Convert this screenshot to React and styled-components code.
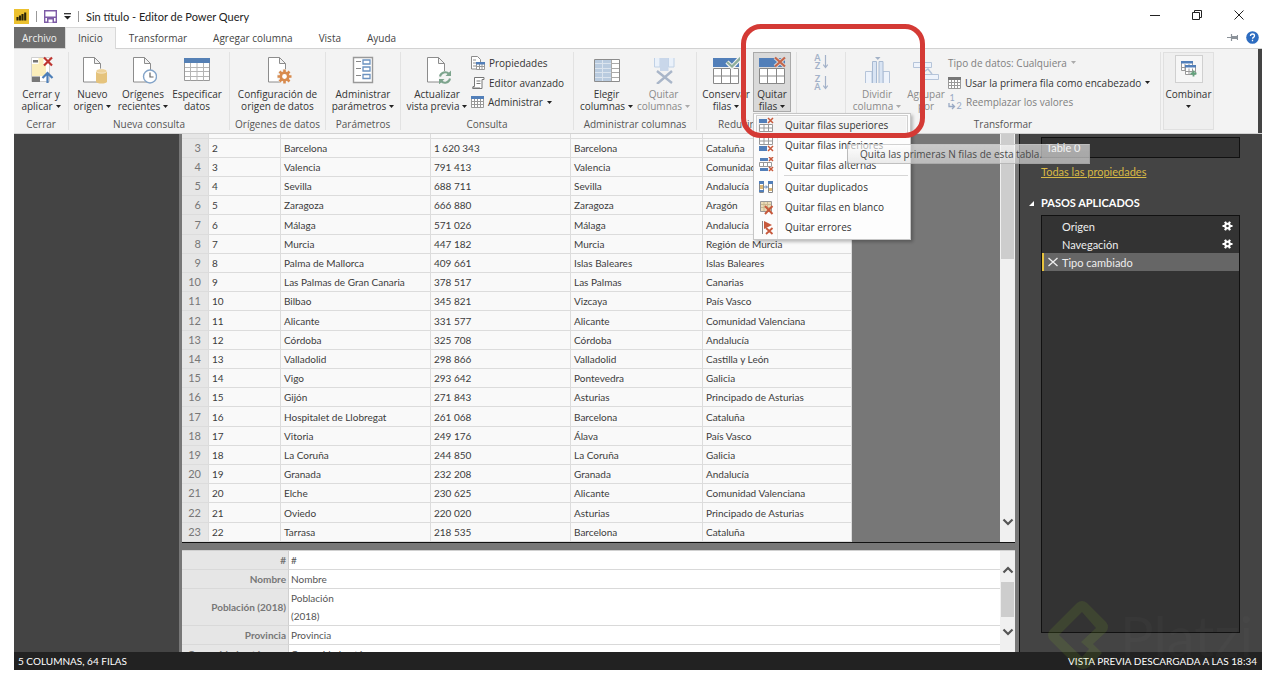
import React from "react";
import styled, { createGlobalStyle } from "styled-components";

const GlobalStyle = createGlobalStyle`
  * {
    box-sizing: border-box;
  }
  body {
    margin: 0;
    background: #fff;
    font-family: "Open Sans", "Noto Sans", sans-serif;
    font-size: 10px;
    color: #333;
  }
  button {
    margin: 0;
    padding: 0;
    border: 0;
    background: none;
    font: inherit;
    color: inherit;
  }
`;

const Window = styled.div`
  display: flex;
  flex-direction: column;
  height: 100vh;
  padding: 0 12px 8px 14px;
  overflow: hidden;
`;

/* ---------- title bar ---------- */

const TitleBar = styled.header`
  display: flex;
  align-items: center;
  justify-content: space-between;
  height: 27px;
  padding-top: 6px;
`;

const TitleGroup = styled.div`
  display: flex;
  align-items: center;
  gap: 7px;
`;

const WindowControls = styled.div`
  display: flex;
  gap: 32px;
  padding: 0 18px 3px 0;
`;

const TitleRule = styled.span`
  width: 1px;
  height: 11px;
  background: #999;
`;

const Title = styled.h1`
  margin: 0;
  font-family: Lato, sans-serif;
  font-size: 11px;
  font-weight: normal;
  color: #222;
`;

const IconButton = styled.button`
  display: flex;
  align-items: center;
  justify-content: center;
`;

/* ---------- tabs ---------- */

const Tabs = styled.nav`
  display: flex;
  align-items: stretch;
  height: 21px;
`;

const Tab = styled.button`
  padding: 0 12px 1px;
  border: 1px solid transparent;
  border-width: 1px 1px 0;
  color: #444;
  ${props =>
    props.$file && "background: #6d6d6d; color: #f0f0f0; padding: 0 7px 1px;"}
  ${props =>
    props.$active &&
    "background: #f3f3f3; border-color: #d8d8d8; margin-bottom: -1px; z-index: 3;"}
`;

const TabTools = styled.div`
  display: flex;
  align-items: center;
  gap: 8px;
  margin-left: auto;
  padding: 0 3px 1px 0;
`;

/* ---------- ribbon ---------- */

const Ribbon = styled.div`
  position: relative;
  z-index: 2;
  display: flex;
  height: 86px;
  flex-shrink: 0;
  padding-top: 3px;
  border: 1px solid #d2d2d2;
  border-width: 1px 0;
  background: #f3f3f3;
  box-shadow: inset -4px 0 #444;
`;

const GroupBox = styled.section`
  display: flex;
  flex-direction: column;
  flex-shrink: 0;
  width: ${props => props.$width}px;
  border-right: 1px solid #e2e2e2;
  margin-bottom: 3px;
`;

const GroupBody = styled.div`
  display: flex;
  justify-content: ${props => props.$align || "center"};
  gap: 2px;
  height: 60px;
  padding-left: ${props => props.$start || 0}px;
`;

const GroupLabel = styled.div`
  height: 18px;
  margin-top: 3px;
  line-height: 18px;
  text-align: center;
  white-space: nowrap;
  color: #555;
`;

const BigButton = styled.button`
  display: flex;
  flex-direction: column;
  align-items: center;
  gap: 4px;
  width: ${props => props.$width}px;
  height: 60px;
  padding-top: 4px;
  line-height: 12px;
  white-space: nowrap;
  color: ${props => (props.disabled ? "#8a8a8a" : "#333")};
  ${props =>
    props.$pressed &&
    "background: #d9d9d9; box-shadow: inset 0 0 0 1px #a9a9a9;"}
  svg {
    flex-shrink: 0;
  }
`;

const LabelLine = styled.span`
  display: flex;
  align-items: center;
  justify-content: center;
  gap: 3px;
  height: 12px;
`;

const SmallList = styled.div`
  display: flex;
  flex-direction: column;
  padding-top: 1px;
`;

const SmallButton = styled.button`
  display: flex;
  align-items: center;
  gap: 4px;
  height: 20px;
  white-space: nowrap;
  color: ${props => (props.disabled ? "#808080" : "#333")};
`;

const ReplaceMark = styled.span`
  display: grid;
  grid-template: 8px 8px / 8px 6px;
  align-items: center;
  color: #98a9c4;
  font-family: Lato, sans-serif;
  font-size: 9px;
  line-height: 8px;
`;

const SortButtons = styled.div`
  display: flex;
  flex-direction: column;
  gap: 5px;
  padding-top: 2px;
`;

const SortButton = styled.button`
  display: flex;
  align-items: center;
  gap: 2px;
  height: 16px;
  color: #a3b2c9;
  font-family: Lato, sans-serif;
  font-size: 9px;
  font-weight: bold;
  line-height: 8px;
`;

const CombineGroup = styled.section`
  width: 51px;
  margin: 0 0 3px 2px;
  border: 1px solid #e0e0e0;
  background: #efefef;
`;

const CombineButton = styled(BigButton)`
  padding-top: 2px;
`;

const CombineIcon = styled.span`
  display: flex;
  align-items: center;
  justify-content: center;
  width: 28px;
  height: 28px;
  margin-bottom: 1px;
  border: 1px solid #d0d0d0;
  background: #f6f6f6;
`;

/* ---------- open menu ---------- */

const MenuAnchor = styled.div`
  position: relative;
`;

const Menu = styled.div`
  position: absolute;
  left: 0;
  top: 61px;
  width: 158px;
  padding: 1px 2px 2px;
  border: 1px solid #c6c6c6;
  background: linear-gradient(
    90deg,
    #fcfcfc 23px,
    #e2e2e2 23px,
    #e2e2e2 24px,
    #fdfdfd 24px
  );
  box-shadow: 2px 2px 3px rgba(0, 0, 0, 0.25);
`;

const MenuItem = styled.button`
  display: flex;
  align-items: center;
  gap: 11px;
  width: 100%;
  height: 20px;
  padding-left: 2px;
  white-space: nowrap;
  ${props =>
    props.$active &&
    "background: #f3f3f3; box-shadow: inset 0 0 0 1px #d0d0d0, inset 0 0 0 2px #fafafa;"}
`;

const MenuRule = styled.hr`
  height: 1px;
  margin: 0 0 1px 28px;
  border: 0;
  background: #d6d6d6;
`;

const Tooltip = styled.div`
  position: absolute;
  left: 94px;
  top: 92px;
  width: 243px;
  height: 20px;
  padding-left: 12px;
  line-height: 19px;
  white-space: nowrap;
  color: #4a4a4a;
  border: 1px solid rgba(150, 150, 150, 0.6);
  border-top-color: rgba(200, 200, 200, 0.7);
  background: linear-gradient(
    rgba(255, 255, 255, 0.6),
    rgba(225, 225, 225, 0.65)
  );
`;

const Highlight = styled.div`
  position: absolute;
  left: -12px;
  top: -28px;
  width: 184px;
  height: 114px;
  border: 5px solid #d43a35;
  border-radius: 20px;
  pointer-events: none;
`;

/* ---------- workspace ---------- */

const Workspace = styled.div`
  display: flex;
  flex: 1;
  min-height: 0;
  background: #444;
`;

const Queries = styled.aside`
  width: 165px;
  flex-shrink: 0;
  background: #444;
`;

const Center = styled.main`
  display: flex;
  flex-direction: column;
  flex: 1;
  min-width: 0;
  padding: 0 4px 0 3px;
  background: #777;
  border-right: 1px solid #111;
`;

const GridPane = styled.div`
  display: flex;
  justify-content: space-between;
  height: 409px;
  overflow: hidden;
  border-bottom: 1px solid #111;
`;

const Grid = styled.table`
  width: 670px;
  align-self: flex-start;
  table-layout: fixed;
  border-collapse: separate;
  border-spacing: 0;
  background: #f9f9f9;
  color: #3c3c3c;
  font-family: Lato, sans-serif;
  font-size: 10px;
  th,
  td {
    height: 19px;
    padding: 0 3px;
    border: 1px solid #dcdcdc;
    border-width: 0 1px 1px 0;
    text-align: left;
    white-space: nowrap;
    line-height: 18px;
  }
  th {
    padding: 0 7px 0 0;
    background: #e6e6e6;
    color: #777;
    font-size: 11px;
    font-weight: normal;
    text-align: right;
  }
  tr:nth-child(5n) td {
    height: 20px;
  }
  thead td {
    height: 5px;
    line-height: 1px;
  }
  thead td:first-child {
    background: #e6e6e6;
  }
`;

const Scrollbar = styled.div`
  display: flex;
  flex-direction: column;
  align-items: center;
  width: 15px;
  flex-shrink: 0;
  padding: ${props => props.$pad};
  background: #f0f0f0;
`;

const Thumb = styled.div`
  width: 13px;
  height: ${props => props.$height}px;
  margin: ${props => props.$top || 0}px 0 auto;
  background: #cdcdcd;
`;

const DetailPane = styled.div`
  display: flex;
  flex: 1;
  min-height: 0;
  margin-top: 7px;
  overflow: hidden;
  border-top: 1px solid #d0d0d0;
  background: #fff;
`;

const Detail = styled.table`
  flex: 1;
  align-self: flex-start;
  border-collapse: separate;
  border-spacing: 0;
  color: #555;
  font-family: Lato, sans-serif;
  font-size: 10px;
  th,
  td {
    height: 19px;
    padding: 0 2px;
    border-bottom: 1px solid #d9d9d9;
    text-align: left;
    line-height: 18px;
  }
  th {
    width: 107px;
    background: #e6e6e6;
    border-right: 1px solid #d0d0d0;
    color: #777;
    text-align: right;
    white-space: nowrap;
  }
`;

/* ---------- query settings ---------- */

const Settings = styled.aside`
  display: flex;
  flex-direction: column;
  align-items: flex-start;
  width: 242px;
  flex-shrink: 0;
  padding: 3px 22px 19px 21px;
  color: #eee;
  font-family: Lato, sans-serif;
  font-size: 11px;
`;

const NameInput = styled.input`
  width: 100%;
  height: 21px;
  padding: 0 4px;
  border: 1px solid #111;
  background: #333;
  color: #eee;
  font: inherit;
`;

const PropertiesLink = styled.a`
  margin-top: 6px;
  line-height: 16px;
  color: #d9b945;
`;

const SettingsHeading = styled.h2`
  display: flex;
  align-items: center;
  gap: 7px;
  margin: 14px 0 3px -12px;
  line-height: 18px;
  font-size: 11px;
  color: #fff;
`;

const Steps = styled.ol`
  flex: 1;
  width: 100%;
  margin: 0;
  padding: 1px 0;
  border: 1px solid #111;
  background: #333;
  list-style: none;
`;

const Step = styled.li`
  display: flex;
  align-items: center;
  height: 18px;
  padding-right: 6px;
  border-left: 2px solid ${props => (props.$active ? "#e8c33c" : "transparent")};
  background: ${props => (props.$active ? "#666" : "none")};
`;

const StepMark = styled.span`
  display: flex;
  justify-content: center;
  width: 18px;
`;

const StepName = styled.button`
  flex: 1;
  text-align: left;
`;

const StatusBar = styled.footer`
  display: flex;
  align-items: center;
  justify-content: space-between;
  height: 18px;
  flex-shrink: 0;
  padding: 0 5px 0 4px;
  background: #222;
  color: #fff;
  font-family: Lato, sans-serif;
  font-size: 10px;
`;

const Watermark = styled.div`
  position: absolute;
  right: 12px;
  bottom: 8px;
  z-index: 3;
  display: flex;
  align-items: center;
  gap: 10px;
  width: 214px;
  height: 70px;
  overflow: hidden;
  pointer-events: none;
  font-family: Lato, sans-serif;
  font-size: 56px;
  color: rgba(255, 255, 255, 0.02);
  svg {
    flex-shrink: 0;
  }
`;

/* ---------- icons ---------- */

const Caret = ({ muted }) => (
  <svg width="5" height="3" viewBox="0 0 5 3">
    <path d="M0 0h5L2.5 3z" fill={muted ? "#aaa" : "#222"} />
  </svg>
);

const Chevron = ({ up }) => (
  <svg width="12" height="8" viewBox="0 0 12 8">
    <path
      d={up ? "M1.5 6.5 6 2l4.5 4.5" : "M1.5 1.5 6 6l4.5-4.5"}
      fill="none"
      stroke="#555"
      strokeWidth="2.2"
    />
  </svg>
);

const AppLogo = () => (
  <svg width="15" height="15" viewBox="0 0 15 15">
    <rect width="15" height="15" fill="#ecc12f" />
    <path
      d="M3.5 11.5V8M6 11.5V6.500M8.500 11.500V5M11.2 11.5V3.5"
      stroke="#2a2408"
      strokeWidth="2.1"
    />
  </svg>
);

const SaveIcon = () => (
  <svg width="13" height="13" viewBox="0 0 13 13">
    <path d="M.7.7h11.6v11.6H.7z" fill="#fff" stroke="#7d5ba6" strokeWidth="1.4" />
    <path d="M1 6.5h11V8H1zM3 8h7v4.5H3z" fill="#7d5ba6" />
    <path d="M4.500 9.5h4v3h-4z" fill="#fff" />
  </svg>
);

const Page = () => (
  <path
    d="M4.5 1.5h11l6 6v18.500h-17zM15.500 1.500v6h6"
    fill="#fff"
    stroke="#8c8c8c"
  />
);

const Big = ({ children }) => (
  <svg width="28" height="28" viewBox="0 0 28 28">
    {children}
  </svg>
);

const ApplyIcon = () => (
  <Big>
    <path d="M4.5 1.5h18v24h-18z" fill="#fff" stroke="#d0d0d0" />
    <path d="M5 2h4v5H5z" fill="#fff" />
    <path d="M5 8h14v12H5z" fill="#fbeebb" />
    <path d="M11.500 2h5v18h-5z" fill="#fbeebb" />
    <path d="M6 4h5v2.500H6zM5 20.500h8V26H5z" fill="#777" />
    <path d="M17 1.500l8 8M25 1.500l-8 8" stroke="#bd3530" strokeWidth="2.2" />
    <path d="M20.500 27V17.500M15.500 22l5-5 5 5" fill="none" stroke="#4d7fb8" strokeWidth="2.2" />
  </Big>
);

const SourceIcon = () => (
  <Big>
    <Page />
    <path d="M17 15v10.500c0 2.800 11 2.800 11 0V15z" fill="#e5c37c" />
    <ellipse cx="22.500" cy="15" rx="5.500" ry="2.200" fill="#edd29a" stroke="#fff" strokeWidth=".5" />
  </Big>
);

const RecentIcon = () => (
  <Big>
    <Page />
    <circle cx="21" cy="20.500" r="6.500" fill="#fff" stroke="#83a4c9" strokeWidth="1.4" />
    <path d="M21 16.500v4.500h3.500" fill="none" stroke="#666" strokeWidth="1.2" />
  </Big>
);

const EnterIcon = () => (
  <Big>
    <path d="M1.500 3.500h25v21h-25z" fill="#fff" stroke="#999" />
    <path d="M1 2h26v5H1z" fill="#5580b5" />
    <path d="M2 11.500h24M2 15.500h24M2 20.500h24M7.500 7v17.500M14 7v17.500M20.500 7v17.500" stroke="#b5b5b5" />
  </Big>
);

const SettingsIcon = () => (
  <Big>
    <Page />
    <circle cx="20.500" cy="20.500" r="7.500" fill="#f3f3f3" />
    <path
      d="M20.500 13.500v14M13.500 20.500h14M15.500 15.500l10 10M25.500 15.500l-10 10"
      stroke="#d88b4e"
      strokeWidth="2.6"
    />
    <circle cx="20.500" cy="20.500" r="3.700" fill="#fff" stroke="#d88b4e" strokeWidth="2.6" />
  </Big>
);

const ParamsIcon = () => (
  <Big>
    <path d="M4.500 1.500h19v25h-19z" fill="#fff" stroke="#999" strokeWidth="1.4" />
    <path d="M7 5.500h5M7 12.500h5M7 19.500h5" stroke="#888" />
    <path d="M14 4h7v4h-7zM14 11h7v4h-7zM14 18.500h7v4h-7z" fill="#fff" stroke="#6b92c0" strokeWidth="1.3" />
  </Big>
);

const RefreshIcon = () => (
  <Big>
    <Page />
    <circle cx="22" cy="21.500" r="6.500" fill="#f3f3f3" />
    <path
      d="M17 20.500a5.200 5.200 0 0 1 9-2.500M27 22.500a5.200 5.200 0 0 1-9 2.500"
      fill="none"
      stroke="#7da48d"
      strokeWidth="2"
    />
    <path d="M28 14.500v5.500h-5.500zM16 28.500V23h5.500z" fill="#7da48d" />
  </Big>
);

const ChooseColsIcon = () => (
  <Big>
    <path d="M1.500 3.500h25v22h-25z" fill="#fff" />
    <path d="M2 4h16v21.500H2z" fill="#b9cbdf" />
    <path d="M2 7.500h16M2 12.500h16M2 16.500h16M2 21.500h16M9.500 4v21.500" stroke="#dbe4ee" />
    <path d="M18 7.500h8M18 12.500h8M18 16.500h8M18 21.500h8M18.500 4v21.500" stroke="#aaa" />
    <path d="M1.500 3.500h25v22h-25z" fill="none" stroke="#8c8c8c" />
  </Big>
);

const RemoveColsIcon = () => (
  <Big>
    <path d="M4.500 2v9H10V2M18.500 2v9H24V2" fill="#eaf1fa" stroke="#c0d1e6" />
    <path d="M10 2h8.500v13H10z" fill="#c9d7ea" />
    <path d="M7 15l15 12M22 15L7 28" stroke="#a9b6c9" strokeWidth="2.4" />
  </Big>
);

const RowsTable = () => (
  <>
    <path d="M1 2h26v9H1z" fill="#527fb9" />
    <path
      d="M1.500 12.500h25v15h-25zM1.500 20h25M9.500 12.500v15M18.500 12.500v15"
      fill="#fff"
      stroke="#888"
    />
  </>
);

const KeepRowsIcon = () => (
  <Big>
    <RowsTable />
    <path d="M15 6l5 5 9-10" fill="none" stroke="#f3f3f3" strokeWidth="4.5" />
    <path d="M15 6l5 4.500 9-9" fill="none" stroke="#8fae9b" strokeWidth="2.3" />
  </Big>
);

const RemoveRowsIcon = () => (
  <Big>
    <RowsTable />
    <path d="M17 1.500l10 9M27 1.500l-10 9" stroke="#d9d9d9" strokeWidth="4" />
    <path d="M17 1.500l10 9M27 1.500l-10 9" stroke="#c4654a" strokeWidth="2.2" />
  </Big>
);

const SplitIcon = () => (
  <Big>
    <path d="M2.500 27V15.500H9V27M20 27V15.500h6.500V27" fill="#eef3fb" stroke="#b5c4d9" />
    <path d="M9.500 27V5.500h4V27M16 27V5.500h4V27" fill="#d9e4f3" stroke="#a8bad2" />
    <path d="M12 1h5.500l-2.700 3z" fill="#a3b2c7" />
  </Big>
);

const GroupByIcon = () => (
  <Big>
    <path d="M1.500 6.500h18v5h-18zM8.500 18.500h18v5h-18z" fill="#eef3fb" stroke="#b5c4d9" />
    <path d="M11 16.500l5-3.500 4 5" fill="none" stroke="#b5c4d9" strokeWidth="1.5" />
  </Big>
);

const SortArrow = () => (
  <svg width="5" height="14" viewBox="0 0 5 14">
    <path d="M2.500 0v12M.2 9.500l2.300 3 2.300-3" fill="none" stroke="#a3b2c9" strokeWidth="1.2" />
  </svg>
);

const PropsIcon = () => (
  <svg width="14" height="14" viewBox="0 0 14 14">
    <path d="M.5.5h6l3 3V13h-9zM2 4h3M2 7h3M2 10h3" fill="#fff" stroke="#8c8c8c" />
    <path d="M5.500 7.500h8v6h-8zM5.500 10.500h8M8.500 8v5.500M11 8v5.500" fill="#fff" stroke="#999" />
    <path d="M5 6h9v2.500H5z" fill="#527fb9" />
  </svg>
);

const EditorIcon = () => (
  <svg width="14" height="14" viewBox="0 0 14 14">
    <path d="M3.500 1.500h9.500v2h-2v9h-9v-2h1.500z" fill="#fff" stroke="#777" />
    <path d="M5.500 5h4M5.500 7.500h4M1 12h8" stroke="#777" />
  </svg>
);

const TableIcon = ({ head }) => (
  <svg width="13" height="12" viewBox="0 0 13 12">
    <path
      d="M.5.5h12v11H.5zM1 5.500h11M1 8.500h11M3.500 3v8.500M6.500 3v8.500M9.500 3v8.500"
      fill="#fff"
      stroke="#999"
    />
    <path d="M0 0h13v3H0z" fill={head} />
  </svg>
);

const CombineGlyph = () => (
  <svg width="16" height="16" viewBox="0 0 16 16">
    <path d="M.5.5h11v9H.5zM.5 6.500h11M4 3v6.500M8 3v6.500" fill="#fff" stroke="#999" />
    <path d="M0 0h12v2.500H0z" fill="#527fb9" />
    <path d="M4.500 5.500h10v8h-10zM4.500 10.500h10M8 7.500v6M11.500 7.500v6" fill="#fff" stroke="#999" />
    <path d="M4 4h11v2.500H4z" fill="#527fb9" />
    <path d="M12.500 9.500v6M9.500 12.500h6" stroke="#63a27c" strokeWidth="1.8" />
  </svg>
);

const MenuSvg = ({ children }) => (
  <svg width="16" height="16" viewBox="0 0 16 16">
    {children}
  </svg>
);

const Cross = ({ x, y, s = 5 }) => (
  <path
    d={`M${x} ${y}l${s} ${s}M${x + s} ${y}l-${s} ${s}`}
    stroke="#c7593c"
    strokeWidth="1.5"
  />
);

const menuIcons = {
  top: (
    <MenuSvg>
      <path d="M1 2h8v4H1z" fill="#527fb9" />
      <path d="M1.500 7.500h13v7h-13zM1.500 11h13M6 7.500v7M10.500 7.500v7" fill="#fff" stroke="#999" />
      <Cross x={10} y={1} />
    </MenuSvg>
  ),
  bottom: (
    <MenuSvg>
      <path d="M1.500.5h13v7h-13zM1.500 4h13M6 .5v7M10.500.5v7" fill="#fff" stroke="#999" />
      <path d="M1 9h8v5H1z" fill="#527fb9" />
      <Cross x={10} y={9} />
    </MenuSvg>
  ),
  alternate: (
    <MenuSvg>
      <path d="M2 1h8v3H2zM2 11h8v3H2z" fill="#527fb9" />
      <path d="M1.500 5.500h12v4h-12zM5.500 5.500v4M9.500 5.500v4" fill="#fff" stroke="#999" />
      <Cross x={11} y={0} s={4} />
      <Cross x={11} y={10} s={4} />
    </MenuSvg>
  ),
  duplicates: (
    <MenuSvg>
      <path d="M1.500 2.500h4v11h-4zM10.500 2.500h4v11h-4z" fill="#fff" stroke="#888" />
      <path d="M1 2h5v3H1zM10 2h5v3h-5zM1 11h5v2H1z" fill="#527fb9" />
      <path d="M2 6h3v4H2zM11 9h3v3h-3z" fill="#dcb877" />
      <path d="M6 8h3M8 6.500L9.500 8 8 9.500" fill="none" stroke="#527fb9" />
    </MenuSvg>
  ),
  blank: (
    <MenuSvg>
      <path d="M2.500 2.500h11v10h-11z" fill="#eadbb8" stroke="#999" />
      <path d="M3 5.500h10M3 8.500h10M6 3v9M9.500 3v9" stroke="#c9b88f" />
      <path d="M7 7l7.500 8M14.500 7L7 15" stroke="#c7593c" strokeWidth="2" />
    </MenuSvg>
  ),
  errors: (
    <MenuSvg>
      <path d="M4.500 2v13" stroke="#888" />
      <path d="M6 2l8 4-8 4z" fill="#c7593c" />
      <path d="M8 9l6.500 6M14.500 9L8 15" stroke="#c7593c" strokeWidth="1.8" />
    </MenuSvg>
  )
};

const Gear = () => (
  <svg width="11" height="10" viewBox="0 0 11 10">
    <path d="M.500 5h10M3 .7l5 8.600M8 .7L3 9.300" stroke="#fff" strokeWidth="2.2" />
    <circle cx="5.500" cy="5" r="2.300" fill="#333" stroke="#fff" strokeWidth="2" />
  </svg>
);

const PlatziMark = () => (
  <svg width="62" height="70" viewBox="0 0 62 70">
    <path
      d="M29 3q5-4 10 0l19 19q4 5 0 10L45 44l9 9-13 14q-6 4-12 0L2 40q-4-5 0-10zM34 12L11 35l23 22 7-8-8-7 15-14z"
      fill="rgba(140, 190, 40, 0.13)"
      fillRule="evenodd"
    />
  </svg>
);

/* ---------- data ---------- */

const rows = [
  ["Barcelona", "1 620 343", "Barcelona", "Cataluña"],
  ["Valencia", "791 413", "Valencia", "Comunidad Valenciana"],
  ["Sevilla", "688 711", "Sevilla", "Andalucía"],
  ["Zaragoza", "666 880", "Zaragoza", "Aragón"],
  ["Málaga", "571 026", "Málaga", "Andalucía"],
  ["Murcia", "447 182", "Murcia", "Región de Murcia"],
  ["Palma de Mallorca", "409 661", "Islas Baleares", "Islas Baleares"],
  ["Las Palmas de Gran Canaria", "378 517", "Las Palmas", "Canarias"],
  ["Bilbao", "345 821", "Vizcaya", "País Vasco"],
  ["Alicante", "331 577", "Alicante", "Comunidad Valenciana"],
  ["Córdoba", "325 708", "Córdoba", "Andalucía"],
  ["Valladolid", "298 866", "Valladolid", "Castilla y León"],
  ["Vigo", "293 642", "Pontevedra", "Galicia"],
  ["Gijón", "271 843", "Asturias", "Principado de Asturias"],
  ["Hospitalet de Llobregat", "261 068", "Barcelona", "Cataluña"],
  ["Vitoria", "249 176", "Álava", "País Vasco"],
  ["La Coruña", "244 850", "La Coruña", "Galicia"],
  ["Granada", "232 208", "Granada", "Andalucía"],
  ["Elche", "230 625", "Alicante", "Comunidad Valenciana"],
  ["Oviedo", "220 020", "Asturias", "Principado de Asturias"],
  ["Tarrasa", "218 535", "Barcelona", "Cataluña"]
];

const columnWidths = [27, 72, 150, 140, 132, 149];

const menuItems = [
  { icon: "top", label: "Quitar filas superiores", active: true },
  { icon: "bottom", label: "Quitar filas inferiores" },
  { icon: "alternate", label: "Quitar filas alternas" },
  { icon: "duplicates", label: "Quitar duplicados", rule: true },
  { icon: "blank", label: "Quitar filas en blanco" },
  { icon: "errors", label: "Quitar errores" }
];

const steps = [
  { name: "Origen", options: true },
  { name: "Navegación", options: true },
  { name: "Tipo cambiado" }
];

/* ---------- ribbon parts ---------- */

const Group = ({ width, label, align, start, children }) => (
  <GroupBox $width={width}>
    <GroupBody $align={align} $start={start}>
      {children}
    </GroupBody>
    <GroupLabel>{label}</GroupLabel>
  </GroupBox>
);

const Command = ({ icon, top, bottom, caret, width, disabled, pressed }) => (
  <BigButton $width={width} disabled={disabled} $pressed={pressed}>
    {icon}
    <span>
      <LabelLine>{top}</LabelLine>
      <LabelLine>
        {bottom}
        {caret && <Caret muted={disabled} />}
      </LabelLine>
    </span>
  </BigButton>
);

class App extends React.Component {
  state = {
    name: "Table 0",
    step: "Tipo cambiado"
  };

  handleChange = e => {
    this.setState({ name: e.target.value });
  };

  renderRibbon() {
    return (
      <Ribbon>
        <Group width={55} label="Cerrar">
          <Command icon={<ApplyIcon />} top="Cerrar y" bottom="aplicar" caret width={50} />
        </Group>
        <Group width={161} label="Nueva consulta" align="flex-start">
          <Command icon={<SourceIcon />} top="Nuevo" bottom="origen" caret width={47} />
          <Command icon={<RecentIcon />} top="Orígenes" bottom="recientes" caret width={50} />
          <Command icon={<EnterIcon />} top="Especificar" bottom="datos" width={54} />
        </Group>
        <Group width={96} label="Orígenes de datos">
          <Command icon={<SettingsIcon />} top="Configuración de" bottom="origen de datos" width={92} />
        </Group>
        <Group width={75} label="Parámetros">
          <Command icon={<ParamsIcon />} top="Administrar" bottom="parámetros" caret width={70} />
        </Group>
        <Group width={173} label="Consulta" align="flex-start" start={4}>
          <Command icon={<RefreshIcon />} top="Actualizar" bottom="vista previa" caret width={64} />
          <SmallList>
            <SmallButton>
              <PropsIcon /> Propiedades
            </SmallButton>
            <SmallButton>
              <EditorIcon /> Editor avanzado
            </SmallButton>
            <SmallButton>
              <TableIcon head="#527fb9" /> Administrar <Caret />
            </SmallButton>
          </SmallList>
        </Group>
        <Group width={123} label="Administrar columnas">
          <Command icon={<ChooseColsIcon />} top="Elegir" bottom="columnas" caret width={55} />
          <Command icon={<RemoveColsIcon />} top="Quitar" bottom="columnas" caret width={55} disabled />
        </Group>
        <Group width={100} label="Reducir filas" align="flex-start" start={4}>
          <Command icon={<KeepRowsIcon />} top="Conservar" bottom="filas" caret width={50} />
          <MenuAnchor>
            <Command icon={<RemoveRowsIcon />} top="Quitar" bottom="filas" caret width={38} pressed />
            <Menu>
              {menuItems.map(item => (
                <React.Fragment key={item.icon}>
                  {item.rule && <MenuRule />}
                  <MenuItem $active={item.active}>
                    {menuIcons[item.icon]}
                    {item.label}
                  </MenuItem>
                </React.Fragment>
              ))}
            </Menu>
            <Tooltip role="tooltip">Quita las primeras N filas de esta tabla.</Tooltip>
            <Highlight />
          </MenuAnchor>
        </Group>
        <Group width={49} label="">
          <SortButtons>
            <SortButton disabled aria-label="Orden ascendente">
              <span>
                A<br />Z
              </span>
              <SortArrow />
            </SortButton>
            <SortButton disabled aria-label="Orden descendente">
              <span>
                Z<br />A
              </span>
              <SortArrow />
            </SortButton>
          </SortButtons>
        </Group>
        <Group width={315} label="Transformar" align="flex-start" start={4}>
          <Command icon={<SplitIcon />} top="Dividir" bottom="columna" caret width={54} disabled />
          <Command icon={<GroupByIcon />} top="Agrupar" bottom="por" width={40} disabled />
          <SmallList>
            <SmallButton disabled>
              Tipo de datos: Cualquiera <Caret muted />
            </SmallButton>
            <SmallButton>
              <TableIcon head="#777" /> Usar la primera fila como encabezado <Caret />
            </SmallButton>
            <SmallButton disabled>
              <ReplaceMark>
                <span>1</span>
                <span />
                <svg width="8" height="7" viewBox="0 0 8 7">
                  <path d="M1 0v3.500h5.500M4 1l2.500 2.500L4 6" fill="none" stroke="#98a9c4" strokeWidth="1.3" />
                </svg>
                <span>2</span>
              </ReplaceMark>
              Reemplazar los valores
            </SmallButton>
          </SmallList>
        </Group>
        <CombineGroup>
          <CombineButton $width={49}>
            <CombineIcon>
              <CombineGlyph />
            </CombineIcon>
            <span>
              <LabelLine>Combinar</LabelLine>
              <LabelLine>
                <Caret />
              </LabelLine>
            </span>
          </CombineButton>
        </CombineGroup>
      </Ribbon>
    );
  }

  render() {
    const { name, step } = this.state;
    return (
      <>
        <GlobalStyle />
        <Window>
          <TitleBar>
            <TitleGroup>
              <AppLogo />
              <TitleRule />
              <IconButton aria-label="Guardar">
                <SaveIcon />
              </IconButton>
              <IconButton aria-label="Personalizar">
                <svg width="7" height="7" viewBox="0 0 7 7">
                  <path d="M0 .7h7" stroke="#222" strokeWidth="1.2" />
                  <path d="M0 3h7L3.500 6.500z" fill="#222" />
                </svg>
              </IconButton>
              <TitleRule />
              <Title>Sin título - Editor de Power Query</Title>
            </TitleGroup>
            <WindowControls>
              <IconButton aria-label="Minimizar">
                <svg width="10" height="10" viewBox="0 0 10 10">
                  <path d="M0 5.500h10" stroke="#222" />
                </svg>
              </IconButton>
              <IconButton aria-label="Restaurar">
                <svg width="10" height="10" viewBox="0 0 10 10">
                  <path d="M.5 2.500h7v7h-7zM2.500 2.500v-2h7v7h-2" fill="none" stroke="#222" />
                </svg>
              </IconButton>
              <IconButton aria-label="Cerrar">
                <svg width="10" height="10" viewBox="0 0 10 10">
                  <path d="M.5.5l9 9M9.500.5l-9 9" stroke="#222" />
                </svg>
              </IconButton>
            </WindowControls>
          </TitleBar>
          <Tabs>
            <Tab $file>Archivo</Tab>
            <Tab $active>Inicio</Tab>
            <Tab>Transformar</Tab>
            <Tab>Agregar columna</Tab>
            <Tab>Vista</Tab>
            <Tab>Ayuda</Tab>
            <TabTools>
              <IconButton aria-label="Anclar">
                <svg width="11" height="7" viewBox="0 0 11 7">
                  <path d="M0 3.500h4M4.500 0v7M10.500 1v5" stroke="#8b9299" strokeWidth="1.2" />
                  <path d="M5 2h5v3H5z" fill="#8b9299" />
                </svg>
              </IconButton>
              <IconButton aria-label="Ayuda">
                <svg width="13" height="13" viewBox="0 0 13 13">
                  <circle cx="6.500" cy="6.500" r="6.300" fill="#2d6cc0" />
                  <path
                    d="M4.500 5q0-2 2-2t2 1.800q0 1-1 1.500t-1 1.500M6.500 8.800v1.500"
                    fill="none"
                    stroke="#fff"
                    strokeWidth="1.3"
                  />
                </svg>
              </IconButton>
            </TabTools>
          </Tabs>
          {this.renderRibbon()}
          <Workspace>
            <Queries />
            <Center>
              <GridPane>
                <Grid>
                  <colgroup>
                    {columnWidths.map((w, i) => (
                      <col key={i} width={w} />
                    ))}
                  </colgroup>
                  <thead>
                    <tr>
                      {columnWidths.map((w, i) => (
                        <td key={i} />
                      ))}
                    </tr>
                  </thead>
                  <tbody>
                    {rows.map((row, i) => (
                      <tr key={row[0]}>
                        <th scope="row">{i + 3}</th>
                        <td>{i + 2}</td>
                        {row.map((cell, j) => (
                          <td key={j}>{cell}</td>
                        ))}
                      </tr>
                    ))}
                  </tbody>
                </Grid>
                <Scrollbar $pad="0 0 16px">
                  <Thumb $height={125} />
                  <Chevron />
                </Scrollbar>
              </GridPane>
              <DetailPane>
                <Detail>
                  <tbody>
                    <tr>
                      <th scope="row">#</th>
                      <td>#</td>
                    </tr>
                    <tr>
                      <th scope="row">Nombre</th>
                      <td>Nombre</td>
                    </tr>
                    <tr>
                      <th scope="row">Población (2018)</th>
                      <td>
                        Población
                        <br />
                        (2018)
                      </td>
                    </tr>
                    <tr>
                      <th scope="row">Provincia</th>
                      <td>Provincia</td>
                    </tr>
                    <tr>
                      <th scope="row">Comunidad autónoma</th>
                      <td>Comunidad autónoma</td>
                    </tr>
                  </tbody>
                </Detail>
                <Scrollbar $pad="15px 0 16px">
                  <Chevron up />
                  <Thumb $height={35} $top={8} />
                  <Chevron />
                </Scrollbar>
              </DetailPane>
            </Center>
            <Settings>
              <NameInput aria-label="Nombre" value={name} onChange={this.handleChange} />
              <PropertiesLink href="#propiedades">Todas las propiedades</PropertiesLink>
              <SettingsHeading>
                <svg width="5" height="5" viewBox="0 0 5 5">
                  <path d="M5 0v5H0z" fill="#fff" />
                </svg>
                PASOS APLICADOS
              </SettingsHeading>
              <Steps>
                {steps.map(item => (
                  <Step key={item.name} $active={item.name === step}>
                    <StepMark>
                      {item.name === step && (
                        <svg width="10" height="10" viewBox="0 0 10 10">
                          <path d="M.5 1l9 8M9.500 1l-9 8" stroke="#eee" strokeWidth="1.3" />
                        </svg>
                      )}
                    </StepMark>
                    <StepName onClick={() => this.setState({ step: item.name })}>
                      {item.name}
                    </StepName>
                    {item.options && <Gear />}
                  </Step>
                ))}
              </Steps>
            </Settings>
          </Workspace>
          <StatusBar>
            <span>5 COLUMNAS, 64 FILAS</span>
            <span>VISTA PREVIA DESCARGADA A LAS 18:34</span>
          </StatusBar>
          <Watermark>
            <PlatziMark />
            Platzi
          </Watermark>
        </Window>
      </>
    );
  }
}

export default App;
